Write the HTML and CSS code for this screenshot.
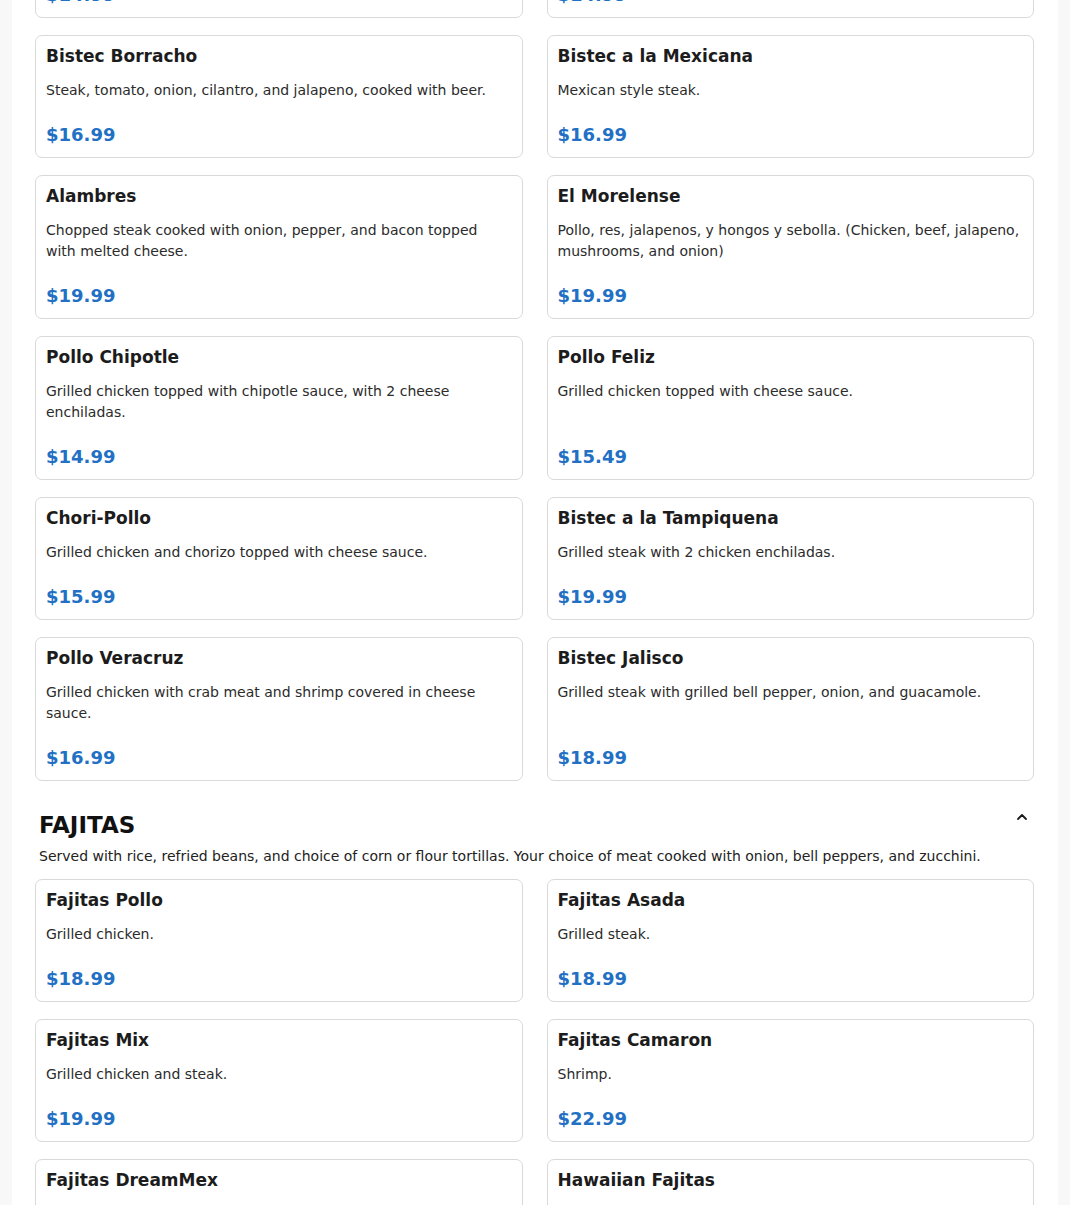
FILE: index.html
```html
<!DOCTYPE html>
<html lang="en">
<head>
<meta charset="utf-8">
<title>Menu</title>
<link rel="stylesheet" href="styles.css">
</head>
<body>
<main class="page">
  <section class="section">
    <div class="grid">
      <article class="card">
        <h3 class="title">Bistec Ranchero</h3>
        <p class="desc">Steak cooked with ranchero sauce.</p>
        <div class="price">$14.99</div>
      </article>
      <article class="card">
        <h3 class="title">Carne Asada</h3>
        <p class="desc">Grilled steak.</p>
        <div class="price">$14.99</div>
      </article>
      <article class="card">
        <h3 class="title">Bistec Borracho</h3>
        <p class="desc">Steak, tomato, onion, cilantro, and jalapeno, cooked with beer.</p>
        <div class="price">$16.99</div>
      </article>
      <article class="card">
        <h3 class="title">Bistec a la Mexicana</h3>
        <p class="desc">Mexican style steak.</p>
        <div class="price">$16.99</div>
      </article>
      <article class="card">
        <h3 class="title">Alambres</h3>
        <p class="desc">Chopped steak cooked with onion, pepper, and bacon topped with melted cheese.</p>
        <div class="price">$19.99</div>
      </article>
      <article class="card">
        <h3 class="title">El Morelense</h3>
        <p class="desc">Pollo, res, jalapenos, y hongos y sebolla. (Chicken, beef, jalapeno, mushrooms, and onion)</p>
        <div class="price">$19.99</div>
      </article>
      <article class="card">
        <h3 class="title">Pollo Chipotle</h3>
        <p class="desc">Grilled chicken topped with chipotle sauce, with 2 cheese enchiladas.</p>
        <div class="price">$14.99</div>
      </article>
      <article class="card">
        <h3 class="title">Pollo Feliz</h3>
        <p class="desc">Grilled chicken topped with cheese sauce.</p>
        <div class="price">$15.49</div>
      </article>
      <article class="card">
        <h3 class="title">Chori-Pollo</h3>
        <p class="desc">Grilled chicken and chorizo topped with cheese sauce.</p>
        <div class="price">$15.99</div>
      </article>
      <article class="card">
        <h3 class="title">Bistec a la Tampiquena</h3>
        <p class="desc">Grilled steak with 2 chicken enchiladas.</p>
        <div class="price">$19.99</div>
      </article>
      <article class="card">
        <h3 class="title">Pollo Veracruz</h3>
        <p class="desc">Grilled chicken with crab meat and shrimp covered in cheese sauce.</p>
        <div class="price">$16.99</div>
      </article>
      <article class="card">
        <h3 class="title">Bistec Jalisco</h3>
        <p class="desc">Grilled steak with grilled bell pepper, onion, and guacamole.</p>
        <div class="price">$18.99</div>
      </article>
    </div>
  </section>

  <section class="section section-spaced">
    <div class="section-head">
      <div class="section-text">
        <h2 class="section-title">FAJITAS</h2>
        <p class="section-desc">Served with rice, refried beans, and choice of corn or flour tortillas. Your choice of meat cooked with onion, bell peppers, and zucchini.</p>
      </div>
      <svg class="chevron" width="16" height="16" viewBox="0 0 16 16" aria-hidden="true">
        <path d="M4 10 L8 6 L12 10" fill="none" stroke="#1a1a1a" stroke-width="1.8" stroke-linecap="round" stroke-linejoin="round"/>
      </svg>
    </div>
    <div class="grid">
      <article class="card">
        <h3 class="title">Fajitas Pollo</h3>
        <p class="desc">Grilled chicken.</p>
        <div class="price">$18.99</div>
      </article>
      <article class="card">
        <h3 class="title">Fajitas Asada</h3>
        <p class="desc">Grilled steak.</p>
        <div class="price">$18.99</div>
      </article>
      <article class="card">
        <h3 class="title">Fajitas Mix</h3>
        <p class="desc">Grilled chicken and steak.</p>
        <div class="price">$19.99</div>
      </article>
      <article class="card">
        <h3 class="title">Fajitas Camaron</h3>
        <p class="desc">Shrimp.</p>
        <div class="price">$22.99</div>
      </article>
      <article class="card">
        <h3 class="title">Fajitas DreamMex</h3>
        <p class="desc">Chicken, steak, and shrimp.</p>
        <div class="price">$24.99</div>
      </article>
      <article class="card">
        <h3 class="title">Hawaiian Fajitas</h3>
        <p class="desc">Grilled chicken, steak, and shrimp cooked with pineapple and ham.</p>
        <div class="price">$24.99</div>
      </article>
    </div>
  </section>
</main>
</body>
</html>
```

FILE: styles.css
```css
html, body {
  margin: 0;
  padding: 0;
}

body {
  background: #f8f8f8;
  font-family: "DejaVu Sans", "Noto Sans", sans-serif;
  color: #1c1c1c;
  overflow: hidden;
}

.page {
  width: 1046px;
  margin: -105px 0 0 12px;
  padding: 0 24px 40px 23px;
  box-sizing: border-box;
  background: #ffffff;
  min-height: 1400px;
}

.grid {
  display: grid;
  grid-template-columns: 1fr 1fr;
  column-gap: 24px;
  row-gap: 17px;
}

.card {
  display: flex;
  flex-direction: column;
  border: 1px solid #d9d9d9;
  border-radius: 7px;
  padding: 10px 10px 12px;
  background: #ffffff;
}

.title {
  margin: 0 0 13px;
  font-size: 17px;
  line-height: 21px;
  font-weight: bold;
  color: #1c1c1c;
}

.desc {
  margin: 0 0 23px;
  font-size: 14px;
  line-height: 21px;
  color: #2b2b2b;
}

.price {
  margin-top: auto;
  font-size: 18px;
  line-height: 21px;
  font-weight: bold;
  color: #2270c4;
}

.section-spaced {
  margin-top: 30px;
}

.section-head {
  display: flex;
  justify-content: space-between;
  align-items: flex-start;
  padding: 0 4px;
}

.section-title {
  margin: 0;
  font-size: 23px;
  line-height: 29px;
  font-weight: bold;
  color: #111111;
}

.section-desc {
  margin: 6px 0 11.5px;
  font-size: 14px;
  line-height: 21px;
  color: #222222;
}

.chevron {
  flex: none;
  margin-top: -2px;
}
```
